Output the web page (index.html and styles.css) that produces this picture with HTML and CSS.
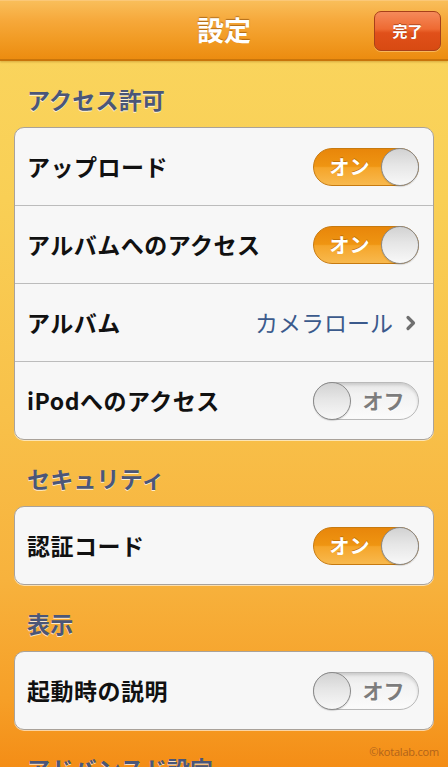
FILE: index.html
```html
<!DOCTYPE html>
<html lang="ja">
<head>
<meta charset="utf-8">
<title>設定</title>
<link rel="stylesheet" href="styles.css">
</head>
<body>
<div class="screen">
  <header class="navbar">
    <span class="nav-spacer"></span>
    <h1 class="nav-title">設定</h1>
    <button class="done-btn">完了</button>
  </header>

  <main class="content">
    <h2 class="section-title">アクセス許可</h2>
    <section class="card">
      <div class="row">
        <span class="label">アップロード</span>
        <span class="toggle on"><span class="toggle-text">オン</span><span class="knob"></span></span>
      </div>
      <div class="row">
        <span class="label">アルバムへのアクセス</span>
        <span class="toggle on"><span class="toggle-text">オン</span><span class="knob"></span></span>
      </div>
      <div class="row">
        <span class="label">アルバム</span>
        <span class="value">カメラロール
          <svg class="chevron" width="12" height="16" viewBox="0 0 12 16"><path d="M3 2.5 L8.5 8 L3 13.5" fill="none" stroke="#6f6f6f" stroke-width="3.2" stroke-linecap="round" stroke-linejoin="round"/></svg>
        </span>
      </div>
      <div class="row">
        <span class="label">iPodへのアクセス</span>
        <span class="toggle off"><span class="knob"></span><span class="toggle-text">オフ</span></span>
      </div>
    </section>

    <h2 class="section-title">セキュリティ</h2>
    <section class="card">
      <div class="row">
        <span class="label">認証コード</span>
        <span class="toggle on"><span class="toggle-text">オン</span><span class="knob"></span></span>
      </div>
    </section>

    <h2 class="section-title">表示</h2>
    <section class="card">
      <div class="row">
        <span class="label">起動時の説明</span>
        <span class="toggle off"><span class="knob"></span><span class="toggle-text">オフ</span></span>
      </div>
    </section>

    <h2 class="section-title">アドバンスド設定</h2>
    <section class="card">
      <div class="row">
        <span class="label">&nbsp;</span>
      </div>
    </section>
  </main>

  <span class="watermark">©kotalab.com</span>
</div>
</body>
</html>
```

FILE: styles.css
```css
html, body {
  margin: 0;
  padding: 0;
  height: 100%;
  overflow: hidden;
}

body {
  font-family: "Noto Sans CJK JP", "Noto Sans", sans-serif;
}

.screen {
  position: relative;
  width: 448px;
  height: 767px;
  overflow: hidden;
  display: flex;
  flex-direction: column;
  background: linear-gradient(to bottom, #fad65f 0px, #f9cf55 200px, #f8c049 420px, #f7b23d 580px, #f69f27 700px, #f48d16 767px);
}

.navbar {
  flex: 0 0 auto;
  height: 58px;
  display: grid;
  grid-template-columns: 1fr auto 1fr;
  align-items: center;
  background: linear-gradient(to bottom, #f9be5a 0px, #f6a83a 20px, #f19a22 40px, #ec8c10 58px);
  border-top: 1px solid #fbc878;
  border-bottom: 2px solid #c9750b;
  box-shadow: 0 1px 2px rgba(150, 90, 10, 0.35);
}

.nav-title {
  margin: 0;
  font-size: 27px;
  font-weight: 700;
  color: #ffffff;
  line-height: 1;
  text-shadow: 0 -1px 1px rgba(120, 60, 0, 0.55);
  padding-bottom: 2px;
}

.done-btn {
  justify-self: end;
  margin-right: 7px;
  margin-top: 1px;
  width: 67px;
  height: 40px;
  padding: 0;
  border: 1px solid #a8401a;
  border-radius: 7px;
  background: linear-gradient(to bottom, #f58a5a 0%, #ee6a32 45%, #e0501a 55%, #d84a12 100%);
  color: #ffffff;
  font-family: "Noto Sans CJK JP", sans-serif;
  font-size: 15px;
  font-weight: 700;
  text-shadow: 0 -1px 0 rgba(120, 30, 0, 0.5);
  box-shadow: 0 1px 0 rgba(255, 220, 160, 0.5);
}

.content {
  padding: 0 14px;
  display: flex;
  flex-direction: column;
}

.section-title {
  margin: 25px 0 14px 13px;
  font-size: 23px;
  line-height: 27px;
  font-weight: 700;
  color: #4b5678;
  text-shadow: 0 1px 0 rgba(255, 255, 255, 0.75);
  letter-spacing: 0.2px;
}

.card {
  background: #f7f7f7;
  border: 1px solid #a9a29a;
  border-radius: 10px;
  box-shadow: 0 1px 0 rgba(255, 255, 255, 0.6);
  overflow: hidden;
}

.row {
  height: 77px;
  display: flex;
  align-items: center;
  justify-content: space-between;
  padding: 0 14px 2px 12px;
  box-sizing: border-box;
}

.row + .row {
  height: 78px;
  border-top: 1px solid #bcbcbc;
}

.label {
  font-size: 23px;
  font-weight: 700;
  color: #111111;
  letter-spacing: 0.5px;
}

.value {
  display: flex;
  align-items: center;
  gap: 12px;
  font-size: 23px;
  font-weight: 400;
  color: #3b5a8c;
}

.chevron {
  display: block;
  margin-right: 2px;
  margin-top: 2px;
}

.toggle {
  position: relative;
  width: 106px;
  height: 38px;
  box-sizing: border-box;
  border-radius: 19px;
  display: flex;
  align-items: center;
  margin-top: 2px;
}

.toggle.on {
  border: 1px solid #c77a10;
  background: linear-gradient(to bottom, #e8860a 0%, #ef9512 48%, #f5a52a 52%, #f8b94e 100%);
  justify-content: flex-end;
}

.toggle.off {
  border: 1px solid #b9b9b9;
  background: linear-gradient(to bottom, #e6e6e6 0%, #f2f2f2 30%, #fbfbfb 100%);
  box-shadow: inset 0 2px 3px rgba(0, 0, 0, 0.12);
  justify-content: flex-start;
}

.toggle-text {
  flex: 1;
  text-align: center;
  font-size: 20px;
  font-weight: 700;
  line-height: 1;
}

.toggle.on .toggle-text {
  color: #ffffff;
  text-shadow: 0 -1px 0 rgba(150, 80, 0, 0.5);
  padding-left: 4px;
}

.toggle.off .toggle-text {
  color: #7c7c7c;
  text-shadow: 0 1px 0 #ffffff;
  font-size: 21px;
  padding-right: 2px;
}

.knob {
  flex: 0 0 auto;
  width: 38px;
  height: 38px;
  box-sizing: border-box;
  border-radius: 50%;
  border: 1.5px solid #8a8a8a;
  background: linear-gradient(to bottom, #d2d2d2 0%, #e6e6e6 45%, #f8f8f8 100%);
  box-shadow: 0 1px 1px rgba(0, 0, 0, 0.15);
}

.toggle.on .knob {
  margin-right: -1px;
}

.toggle.off .knob {
  margin-left: -1px;
}

.watermark {
  position: absolute;
  right: 9px;
  bottom: 8px;
  font-family: "Open Sans", "Noto Sans", sans-serif;
  font-size: 11px;
  color: #b0631a;
  letter-spacing: -0.2px;
}
```
